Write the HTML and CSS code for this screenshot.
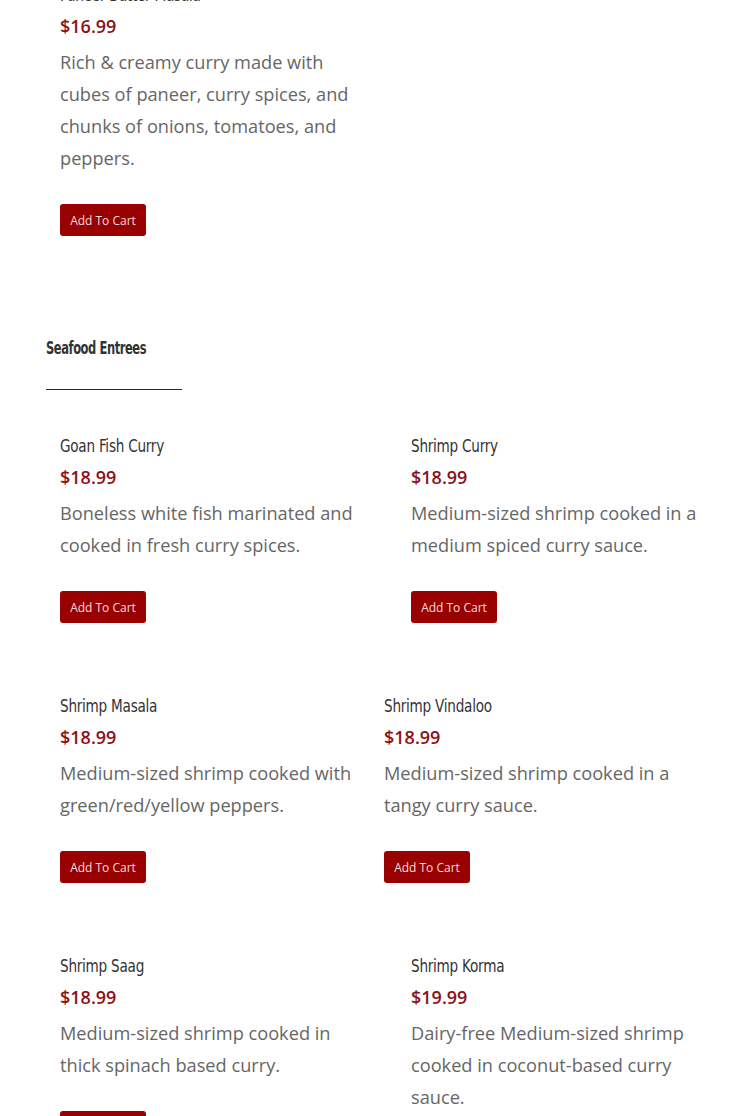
FILE: index.html
```html
<!DOCTYPE html>
<html lang="en">
<head>
<meta charset="utf-8">
<title>Menu</title>
<link rel="stylesheet" href="styles.css">
</head>
<body>
<div class="page">
  <div class="grid">
    <div class="item">
      <h3 class="item-title">Paneer Butter Masala</h3>
      <div class="price">$16.99</div>
      <p class="desc">Rich &amp; creamy curry made with cubes of paneer, curry spices, and chunks of onions, tomatoes, and peppers.</p>
      <button class="cart">Add To Cart</button>
    </div>
  </div>

  <section class="section">
    <h2 class="section-title">Seafood Entrees</h2>
    <div class="rule"></div>
    <div class="grid">
      <div class="item">
        <h3 class="item-title">Goan Fish Curry</h3>
        <div class="price">$18.99</div>
        <p class="desc">Boneless white fish marinated and cooked in fresh curry spices.</p>
        <button class="cart">Add To Cart</button>
      </div>
      <div class="item">
        <h3 class="item-title">Shrimp Curry</h3>
        <div class="price">$18.99</div>
        <p class="desc">Medium-sized shrimp cooked in a medium spiced curry sauce.</p>
        <button class="cart">Add To Cart</button>
      </div>
      <div class="item">
        <h3 class="item-title">Shrimp Masala</h3>
        <div class="price">$18.99</div>
        <p class="desc">Medium-sized shrimp cooked with green/red/yellow peppers.</p>
        <button class="cart">Add To Cart</button>
      </div>
      <div class="item item-shift">
        <h3 class="item-title">Shrimp Vindaloo</h3>
        <div class="price">$18.99</div>
        <p class="desc">Medium-sized shrimp cooked in a tangy curry sauce.</p>
        <button class="cart">Add To Cart</button>
      </div>
      <div class="item">
        <h3 class="item-title">Shrimp Saag</h3>
        <div class="price">$18.99</div>
        <p class="desc">Medium-sized shrimp cooked in thick spinach based curry.</p>
        <button class="cart">Add To Cart</button>
      </div>
      <div class="item">
        <h3 class="item-title">Shrimp Korma</h3>
        <div class="price">$19.99</div>
        <p class="desc">Dairy-free Medium-sized shrimp cooked in coconut-based curry sauce.</p>
        <button class="cart">Add To Cart</button>
      </div>
    </div>
  </section>
</div>
</body>
</html>
```

FILE: styles.css
```css
html, body {
  margin: 0;
  padding: 0;
  background: #fff;
}

body {
  font-family: "Open Sans", "Liberation Sans", sans-serif;
  overflow: hidden;
}

.page {
  margin-top: -21px;
  padding: 0 14px 0 46px;
}

.grid {
  display: grid;
  grid-template-columns: 310px 305px;
  column-gap: 41px;
  row-gap: 67px;
  padding-left: 14px;
}

.item {
  display: flex;
  flex-direction: column;
  align-items: flex-start;
}

.item-shift {
  margin-left: -27px;
}

.item-title {
  margin: 0;
  font-family: "DejaVu Sans Condensed", "Liberation Sans", sans-serif;
  font-weight: 400;
  font-size: 18px;
  line-height: 32px;
  color: #333;
  letter-spacing: -0.3px;
  white-space: nowrap;
  transform: scaleX(0.84);
  transform-origin: left center;
}

.price {
  margin-top: -1px;
  font-weight: 600;
  font-size: 18px;
  line-height: 32px;
  color: #8b1116;
}

.desc {
  margin: 4px 0 0;
  font-size: 18.2px;
  line-height: 32px;
  color: #666;
}

.cart {
  margin-top: 30px;
  width: 86px;
  height: 32px;
  padding: 0;
  border: 0;
  border-radius: 3px;
  background: #990000;
  color: #f4dede;
  font-family: "Open Sans", "Liberation Sans", sans-serif;
  font-size: 12px;
  cursor: pointer;
}

.section {
  margin-top: 96px;
}

.section-title {
  margin: 0;
  font-family: "DejaVu Sans Condensed", "Liberation Sans", sans-serif;
  font-weight: 700;
  font-size: 18px;
  line-height: 32px;
  color: #333;
  letter-spacing: -0.6px;
  white-space: nowrap;
  transform: scaleX(0.71);
  transform-origin: left center;
}

.rule {
  width: 136px;
  height: 1px;
  margin: 25px 0 40px;
  background: #3a1e22;
}
```
